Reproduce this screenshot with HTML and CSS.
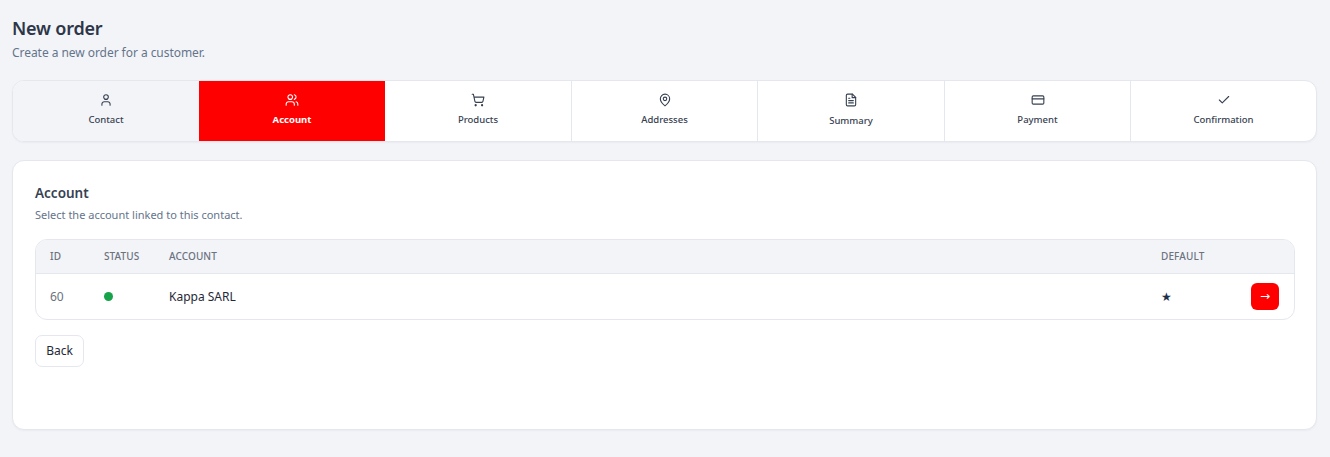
FILE: index.html
```html
<!DOCTYPE html>
<html lang="en">
<head>
<meta charset="utf-8">
<title>New order</title>
<link rel="stylesheet" href="styles.css">
</head>
<body>
<header class="page-head">
  <h1>New order</h1>
  <p>Create a new order for a customer.</p>
</header>
<nav class="steps">
  <div class="step done">
    <svg class="ico" viewBox="0 0 24 24"><path d="M19 21v-2a4 4 0 0 0-4-4H9a4 4 0 0 0-4 4v2"/><circle cx="12" cy="7" r="4"/></svg>
    <span>Contact</span>
  </div>
  <div class="step active">
    <svg class="ico" viewBox="0 0 24 24"><path d="M16 21v-2a4 4 0 0 0-4-4H6a4 4 0 0 0-4 4v2"/><circle cx="9" cy="7" r="4"/><path d="M22 21v-2a4 4 0 0 0-3-3.87"/><path d="M16 3.13a4 4 0 0 1 0 7.75"/></svg>
    <span>Account</span>
  </div>
  <div class="step">
    <svg class="ico" viewBox="0 0 24 24"><circle cx="8" cy="21" r="1"/><circle cx="19" cy="21" r="1"/><path d="M2.05 2.05h2l2.66 12.42a2 2 0 0 0 2 1.58h9.78a2 2 0 0 0 1.95-1.57l1.65-7.43H5.12"/></svg>
    <span>Products</span>
  </div>
  <div class="step">
    <svg class="ico" viewBox="0 0 24 24"><path d="M20 10c0 6-8 12-8 12s-8-6-8-12a8 8 0 0 1 16 0Z"/><circle cx="12" cy="10" r="3"/></svg>
    <span>Addresses</span>
  </div>
  <div class="step summary">
    <svg class="ico" viewBox="0 0 24 24"><path d="M14.5 2H6a2 2 0 0 0-2 2v16a2 2 0 0 0 2 2h12a2 2 0 0 0 2-2V7.5L14.5 2z"/><path d="M14 2v6h6"/><path d="M16 13H8"/><path d="M16 17H8"/><path d="M10 9H8"/></svg>
    <span>Summary</span>
  </div>
  <div class="step">
    <svg class="ico" viewBox="0 0 24 24"><rect x="2" y="5" width="20" height="14" rx="2"/><path d="M2 10h20"/></svg>
    <span>Payment</span>
  </div>
  <div class="step">
    <svg class="ico" viewBox="0 0 24 24"><path d="M20 6 9 17l-5-5"/></svg>
    <span>Confirmation</span>
  </div>
</nav>
<main class="card">
  <h2>Account</h2>
  <p class="hint">Select the account linked to this contact.</p>
  <div class="table-wrap">
    <div class="row head">
      <div class="c-id">ID</div>
      <div class="c-status">Status</div>
      <div class="c-account">Account</div>
      <div class="c-default">Default</div>
      <div class="c-action"></div>
    </div>
    <div class="row body">
      <div class="c-id muted">60</div>
      <div class="c-status"><span class="dot"></span></div>
      <div class="c-account">Kappa SARL</div>
      <div class="c-default star">★</div>
      <div class="c-action"><button class="go">→</button></div>
    </div>
  </div>
  <button class="back">Back</button>
</main>
</body>
</html>
```
FILE: styles.css
```css
* { box-sizing: border-box; }
html, body { margin: 0; }
body {
  background: #f3f4f8;
  font-family: "Noto Sans", "Open Sans", sans-serif;
  color: #1f2937;
  padding: 17px 13px 0 12px;
  height: 457px;
  overflow: hidden;
}
.page-head h1 {
  margin: 0;
  font-size: 18px;
  line-height: 22px;
  font-weight: 600;
  letter-spacing: -0.2px;
  color: #2d3648;
}
.page-head p {
  margin: 5px 0 0;
  font-size: 12px;
  line-height: 18px;
  letter-spacing: -0.05px;
  color: #64748b;
}
.steps {
  display: grid;
  grid-template-columns: 186px 186px 186px 186px 187px 186px 186px;
  margin-top: 18px;
  height: 62px;
  background: #fff;
  border: 1px solid #e5e7ef;
  border-radius: 12px;
  overflow: hidden;
  box-shadow: 0 1px 2px rgba(15, 23, 42, 0.04);
}
.step {
  display: flex;
  flex-direction: column;
  align-items: center;
  padding-top: 12px;
  gap: 6px;
  border-left: 1px solid #e5e7ef;
  font-size: 9.5px;
  line-height: 14px;
  font-weight: 500;
  color: #374151;
}
.step.done { background: #f3f4f8; border-left: 0; }
.step.active { background: #f00; color: #fff; font-weight: 700; border-left: 0; }
.step.active + .step { border-left: 0; }
.step.summary { gap: 7px; }
.ico {
  width: 14px;
  height: 14px;
  fill: none;
  stroke: currentColor;
  stroke-width: 1.9;
  stroke-linecap: round;
  stroke-linejoin: round;
}
.card {
  margin-top: 18px;
  height: 270px;
  background: #fff;
  border: 1px solid #e5e7ef;
  border-radius: 12px;
  padding: 22px 21px 0 22px;
  box-shadow: 0 1px 2px rgba(15, 23, 42, 0.04);
}
.card h2 {
  margin: 0;
  font-size: 13.5px;
  line-height: 20px;
  font-weight: 600;
  color: #374151;
}
.hint {
  margin: 4px 0 0;
  font-size: 11px;
  line-height: 16px;
  color: #64748b;
}
.table-wrap {
  margin-top: 16px;
  border: 1px solid #e5e7ef;
  border-radius: 12px;
  overflow: hidden;
}
.row {
  display: grid;
  grid-template-columns: 54px 65px 1fr 90px 43px;
  align-items: center;
  padding-left: 14px;
}
.row.head {
  height: 34px;
  padding-bottom: 2px;
  background: #f3f4f8;
  border-bottom: 1px solid #e5e7ef;
  font-size: 10px;
  font-weight: 500;
  letter-spacing: 0.1px;
  text-transform: uppercase;
  color: #6b7280;
}
.row.body {
  height: 45px;
  font-size: 12px;
  color: #1f2937;
}
.muted { color: #6b7280; }
.dot {
  display: block;
  width: 9px;
  height: 9px;
  border-radius: 50%;
  background: #16a34a;
}
.star { color: #1e2f4d; font-size: 12px; }
.go {
  display: block;
  width: 28px;
  height: 27px;
  padding: 0 0 2px;
  border: 0;
  border-radius: 6px;
  background: #f00;
  color: #fff;
  font: 400 12px "DejaVu Sans", sans-serif;
}
.back {
  display: block;
  margin-top: 15px;
  width: 49px;
  height: 32px;
  padding: 0 0 2px;
  background: #fff;
  border: 1px solid #e5e7ef;
  border-radius: 7px;
  color: #1f2937;
  font: 400 12px "Noto Sans", sans-serif;
}
```
